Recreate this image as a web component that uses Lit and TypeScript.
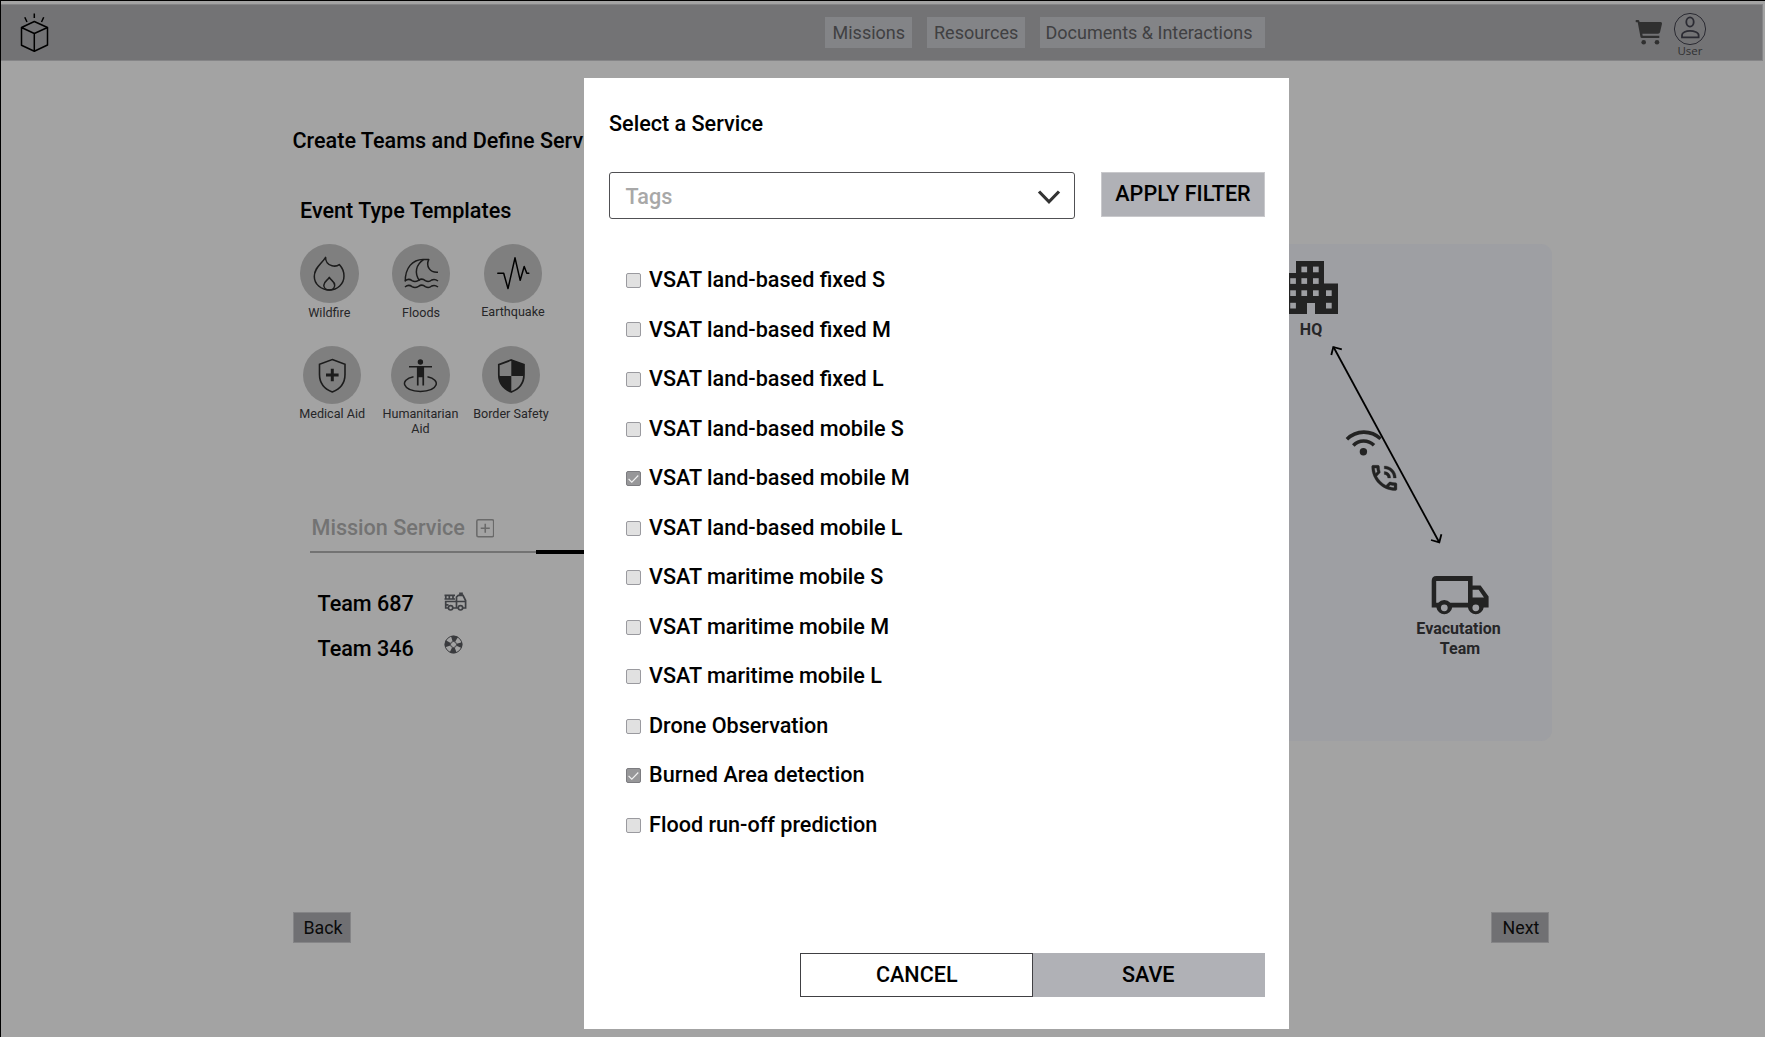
import { LitElement, html, css, svg } from "lit";
import { customElement, property, state } from "lit/decorators.js";
import { classMap } from "lit/directives/class-map.js";

const eventIcons: Record<string, unknown> = {
  wildfire: svg`<g fill="none" stroke="#1c1c1c" stroke-width="1.5" stroke-linejoin="round">
    <path d="M25.6 13.3 C25.4 17.5 28 21 32 21.8 C35 22.5 37.5 22 39.3 20.6 C42 23.5 44 27.5 44 32 C44 40 37.5 46 29.3 46 C21 46 14.3 40 14.3 32.4 C14.3 23.5 21.5 20 25.6 13.3Z"/>
    <path d="M29.3 33.4 C31 36.5 34.7 37.5 34.7 41.2 C34.7 44 32.3 46 29.3 46 C26.3 46 23.8 44 23.8 41.2 C23.8 37.5 27.6 36.5 29.3 33.4Z"/></g>`,
  floods: svg`<g fill="none" stroke="#1c1c1c" stroke-width="1.5" stroke-linejoin="round">
    <path d="M13.3 37.4 C13 24 20.5 15.4 31 15.4 L36.8 15.4 C33.5 22.5 38 28.8 46 28.2"/>
    <path d="M31.5 15.6 C24 20.5 22 29 27.5 36.8"/>
    <path d="M13 37 Q16.5 34 20 36.6 Q23 38.6 26.5 36.4 Q30 33.8 33.3 36.6 Q36.7 38.6 39.7 36 Q42.7 34.4 46 37"/>
    <path d="M13 43 Q16.5 40 20 42.6 Q23 44.6 26.5 42.4 Q30 39.8 33.3 42.6 Q36.7 44.6 39.7 42 Q42.7 40.4 46 43"/></g>`,
  earthquake: svg`<path fill="none" stroke="#000" stroke-width="1.5" stroke-linejoin="round" stroke-linecap="round" d="M13.8 29.3 H19.7 L24 44.6 L31 13.8 L36.2 36.3 L40.2 22.5 L42.8 29.3 H44.8"/>`,
  medical: svg`<g><path fill="none" stroke="#1c1c1c" stroke-width="1.6" d="M29.3 13.6 L42 18.2 V28.5 C42 37 37 43 29.3 46 C21.6 43 16.5 37 16.5 28.5 V18.2Z"/>
    <path fill="none" stroke="#1c1c1c" stroke-width="3" d="M29.3 22.7 V35.3 M23 29 H35.6"/></g>`,
  humanitarian: svg`<g fill="#1c1c1c"><circle cx="29.4" cy="16" r="2.7"/>
    <path d="M18 20 H41 V21.6 H33.1 V39.6 H31.4 V31.3 H27.6 V39.6 H25.9 V21.6 H18Z"/>
    <path fill="none" stroke="#1c1c1c" stroke-width="1.5" d="M22.5 30.7 C8 33.5 11.5 45.4 29.4 45.4 C47.5 45.4 50.5 33.5 36.5 30.7"/></g>`,
  border: svg`<g><path fill="none" stroke="#1c1c1c" stroke-width="1.7" d="M29.3 14 L42 18.6 V28.5 C42 37 37 43 29.3 46 C21.6 43 16.8 37 16.8 28.5 V18.6Z"/>
    <path fill="#1c1c1c" d="M29.3 14 L42 18.6 V30 H29.3Z M29.3 30 V46 C21.6 43 17 37 16.8 30Z"/></g>`,
};

@customElement("event-template")
class EventTemplate extends LitElement {
  @property() icon = "";
  @property() label = "";
  static styles = css`
    :host { display: flex; flex-direction: column; align-items: center; }
    .disc { display: block; width: 58.6px; height: 58.6px; border-radius: 50%; background: #7f7f7f; }
    .label { margin-top: 2px; font: 400 12.6px/15px Roboto, sans-serif; color: #262628; text-align: center; }
    .label.raised { margin-top: 1px; }
  `;
  render() {
    return html`<svg class="disc" viewBox="0 0 58.6 58.6">${eventIcons[this.icon]}</svg>
      <span class=${classMap({ label: true, raised: this.icon === "earthquake" })}>${this.label}</span>`;
  }
}

@customElement("service-option")
class ServiceOption extends LitElement {
  @property() label = "";
  @property({ type: Boolean }) checked = false;
  static styles = css`
    :host { display: flex; align-items: center; height: 49.53px; cursor: pointer; }
    .box { width: 15px; height: 15px; margin: 0.4px 8px 0 0; box-sizing: border-box; border: 1px solid #9a9a9f; border-radius: 2px; background: #e1e1e1; }
    .box.on { background: #979799; border-color: #7c7c80; }
    .tick { display: block; width: 13px; height: 13px; }
    .label { font: 500 21.6px/26px Roboto, sans-serif; color: #000; white-space: nowrap; }
  `;
  render() {
    return html`<span class=${classMap({ box: true, on: this.checked })}>
        ${this.checked
          ? html`<svg class="tick" viewBox="0 0 13 13"><path d="M1.6 7 L4.8 10.2 L11.3 3.5" fill="none" stroke="#f2f2f2" stroke-width="1.1"/></svg>`
          : null}
      </span><span class="label">${this.label}</span>`;
  }
}

@customElement("team-canvas")
class TeamCanvas extends LitElement {
  static styles = css`
    :host { display: block; position: relative; background: #9e9fa3; border-radius: 11px; }
    .art { display: block; width: 100%; height: 100%; }
    .node { position: absolute; font: 700 16px/20px Roboto, sans-serif; color: #262628; text-align: center; white-space: nowrap; }
    .hq { left: 260px; top: 76px; width: 102px; }
    .evac { left: 407px; top: 375px; width: 103px; }
    .line { display: block; }
    .second { padding-left: 3px; }
  `;
  render() {
    const windows = [
      [1301.4, 266.6], [1313, 266.6],
      [1290.2, 278.2], [1301.4, 278.2], [1313, 278.2],
      [1290.2, 290.3], [1301.4, 290.3], [1313, 290.3], [1326, 290.3],
      [1290.2, 302.8], [1326, 302.8],
    ];
    return html`<svg class="art" viewBox="1000 244 552 497">
        <path fill="#232323" d="M1283 273 H1296 V261 H1324 V283.5 H1338 V314 H1315 V303 H1307 V314 H1283Z"/>
        ${windows.map(([x, y]) => svg`<rect x=${x} y=${y} width="5.7" height="5.7" fill="#9e9fa3"/>`)}
        <g fill="none" stroke="#000" stroke-width="1.8">
          <path d="M1333.5 347 L1439.2 542.3"/>
          <path d="M1331.3 355 L1333.3 347 L1341.8 349.4 M1431 540 L1439.3 542.3 L1441.4 534.2"/>
        </g>
        <g fill="none" stroke="#232323" stroke-width="3.6">
          <path d="M1346.9 439.2 C1356.5 429.8 1371 429.8 1380.6 438.8"/>
          <path d="M1353.3 445.5 C1359 439.6 1368 439.6 1374 445.3"/>
        </g>
        <circle cx="1363.4" cy="451.8" r="3.7" fill="#232323"/>
        <g transform="translate(1367.5 461.1) scale(1.4)" fill="#232323" stroke="#232323" stroke-width="0.25">
          <path d="M20 15.5c-1.25 0-2.45-.2-3.57-.57-.1-.03-.21-.05-.31-.05-.26 0-.51.1-.71.29l-2.2 2.2c-2.83-1.44-5.15-3.75-6.59-6.58l2.2-2.21c.28-.27.36-.66.25-1.01C8.7 6.45 8.5 5.25 8.5 4c0-.55-.45-1-1-1H4c-.55 0-1 .45-1 1 0 9.39 7.61 17 17 17 .55 0 1-.45 1-1v-3.5c0-.55-.45-1-1-1zM5.03 5h1.5c.07.88.22 1.75.46 2.59L5.79 8.8c-.41-1.21-.67-2.48-.76-3.8zM19 18.97c-1.32-.09-2.6-.35-3.8-.76l1.2-1.2c.85.24 1.71.39 2.59.45v1.51zM18.5 12h2c0-4.7-3.8-8.5-8.5-8.5v2c3.6 0 6.5 2.9 6.5 6.5zM14.5 12h2c0-2.49-2.01-4.5-4.5-4.5v2c1.38 0 2.5 1.12 2.5 2.5z"/>
        </g>
        <g fill="#232323" fill-rule="evenodd">
          <path d="M1436.4 576 H1472.6 V585.6 H1480.6 L1488.6 596.5 V607.5 H1483.7 A8 8 0 0 1 1467.9 607.5 H1452.2 A8 8 0 0 1 1436.4 607.5 H1431.7 V580.7 Q1431.7 576 1436.4 576Z
            M1436.2 580.9 V602.8 H1438.2 A8 8 0 0 1 1450.3 602.8 H1468 V580.9Z
            M1472.6 589.7 V597.5 H1484 L1478.7 589.7Z
            M1440.9 607.8 A3.4 3.4 0 0 0 1447.7 607.8 A3.4 3.4 0 0 0 1440.9 607.8Z
            M1472.4 607.8 A3.4 3.4 0 0 0 1479.2 607.8 A3.4 3.4 0 0 0 1472.4 607.8Z"/>
        </g>
      </svg>
      <div class="node hq"><span class="line">HQ</span></div>
      <div class="node evac"><span class="line">Evacutation</span><span class="line second">Team</span></div>`;
  }
}

@customElement("app-root")
class AppRoot extends LitElement {
  @state() private services = [
    "VSAT land-based fixed S", "VSAT land-based fixed M", "VSAT land-based fixed L",
    "VSAT land-based mobile S", "VSAT land-based mobile M", "VSAT land-based mobile L",
    "VSAT maritime mobile S", "VSAT maritime mobile M", "VSAT maritime mobile L",
    "Drone Observation", "Burned Area detection", "Flood run-off prediction",
  ];
  @state() private selected = new Set(["VSAT land-based mobile M", "Burned Area detection"]);

  static styles = css`
    :host { display: block; position: relative; box-sizing: border-box; width: 1765px; height: 1037px; overflow: hidden;
      background: #a3a3a3; border-top: 1px solid #000; border-left: 1px solid #000; font-family: Roboto, sans-serif; color: #000; }
    * { box-sizing: border-box; }
    svg { display: block; }
    .top { display: flex; height: 57px; width: 1762px; margin-top: 3px; background: #737375; border: 1px solid #858587; border-left: none; padding-left: 16px; }
    .logo { width: 40px; height: 46px; margin-top: 4px; }
    .nav { display: flex; gap: 14.5px; margin: 12px 0 0 768px; }
    .nav-item { height: 31px; background: #838487; color: #404042; font: 400 18px/32px Roboto, sans-serif; padding-left: 7.5px; white-space: nowrap; }
    .nav-item:nth-child(1) { width: 87px; }
    .nav-item:nth-child(2) { width: 98.5px; }
    .nav-item:nth-child(3) { width: 225.5px; padding-left: 6px; }
    .account { display: flex; margin-left: auto; margin-right: 55px; gap: 10px; }
    .cart { width: 28px; height: 28px; margin-top: 13px; }
    .user { display: flex; flex-direction: column; align-items: center; width: 34px; margin-top: 6.5px; }
    .user-label { font: 400 11.5px/16px "Open Sans", sans-serif; color: #303032; margin-top: -2.5px; }
    .page { display: flex; justify-content: space-between; padding: 67px 213px 0 291.5px; }
    .left { width: 700px; }
    .heading { margin: 0; font: 500 21.6px/26px Roboto, sans-serif; white-space: nowrap; }
    .sub { margin: 44px 0 0 7.5px; }
    .row { display: flex; height: 101.5px; }
    .row.one { margin: 20px 0 0 -9.1px; }
    .row.one event-template { width: 91.8px; }
    .row.two { margin-left: -4.5px; }
    .row.two event-template { width: 88.3px; }
    .row.two event-template:last-child { width: 92.8px; }
    .tab-row { display: flex; gap: 11px; margin: 67.5px 0 0 19px; color: #737373; height: 36px; }
    .plus { width: 18.5px; height: 18.5px; margin-top: 4.5px; }
    .rule { display: flex; align-items: center; height: 4px; margin: -1px 0 0 17.5px; }
    .rule-a { width: 226px; height: 2px; background: #737373; }
    .rule-b { width: 226px; height: 4px; background: #000; }
    .teams { display: flex; flex-direction: column; gap: 19px; margin: 37px 0 0 25px; }
    .team { display: flex; align-items: flex-start; }
    .team-name { width: 126px; font: 500 21.6px/26px Roboto, sans-serif; }
    .truck { width: 24px; height: 20px; margin: 1px 0 0 0.5px; }
    .buoy { width: 19px; height: 19px; margin-top: -1px; }
    team-canvas { width: 552px; height: 497px; margin-top: 116px; margin-left: -452px; flex: none; }
    .pager { display: flex; justify-content: space-between; margin: 171px 216px 0 292px; }
    .page-btn { width: 58px; height: 30.5px; background: #707073; border: 1px solid #858587; font: 400 17.8px/29px Roboto, sans-serif; color: #0a0a0a; text-align: center; padding-left: 2px; }
    .dialog { position: absolute; left: 583px; top: 77px; width: 705px; height: 951.3px; background: #fff; padding: 33px 24px 32px 25px; display: flex; flex-direction: column; }
    .title { margin: 0; font: 500 21.6px/26px Roboto, sans-serif; }
    .filters { display: flex; justify-content: space-between; margin-top: 35px; }
    .select { display: flex; align-items: center; justify-content: space-between; width: 466px; height: 47px; border: 1px solid #505053; border-radius: 3px; padding: 2px 13px 0 15.5px; color: #a8a8a8; font: 500 21.6px/26px Roboto, sans-serif; }
    .chev { width: 24px; height: 18px; }
    .apply { width: 164px; height: 44.5px; background: #b0b1b6; border: 1px solid #c9c9cc; text-align: center; font: 500 21.6px/41px Roboto, sans-serif; }
    .list { margin: 36.5px 0 0 17px; }
    .actions { display: flex; margin: auto 0 0 auto; }
    .action { width: 232.5px; height: 44.5px; text-align: center; font: 500 21.6px/42px Roboto, sans-serif; }
    .cancel { border: 1px solid #404043; padding-left: 1px; }
    .save { background: #b0b1b6; padding-right: 1px; line-height: 44px; }
  `;

  private toggle(name: string) {
    const next = new Set(this.selected);
    next.has(name) ? next.delete(name) : next.add(name);
    this.selected = next;
  }

  render() {
    return html`
      <header class="top">
        <svg class="logo" viewBox="17 9 40 46" fill="none" stroke="#000" stroke-width="1.5" stroke-linejoin="round">
          <path d="M34.3 21.5 L47.5 27.5 V45 L34.3 51.3 L21.5 45.3 V27.5Z M21.5 27.5 L34.3 33.5 L47.5 27.5 M34.3 33.5 V51.3 M34.3 13.5 V18 M24.8 17.3 L27 22 M43.7 17.3 L41.5 22"/>
        </svg>
        <nav class="nav">
          <span class="nav-item">Missions</span><span class="nav-item">Resources</span><span class="nav-item">Documents &amp; Interactions</span>
        </nav>
        <div class="account">
          <svg class="cart" viewBox="1635 18 28 28" fill="#303030">
            <path d="M1638.5 22 H1660.5 Q1662.3 22 1662 23.7 L1660 32.3 Q1659.7 33.7 1658 33.7 H1642.3 L1642.7 35.7 H1659.3 V38 H1641.8 Q1640.7 38 1640.5 37 L1637.7 22.2 H1636 Q1635 21 1636 20 H1638.3 Q1639.3 20.2 1639.6 22Z"/>
            <circle cx="1643.7" cy="42.2" r="2.3"/><circle cx="1657" cy="42.2" r="2.3"/>
          </svg>
          <div class="user">
            <svg width="34" height="34" viewBox="0 0 34 34" fill="none" stroke="#2b2b33">
              <circle cx="17" cy="17" r="15.6" stroke-width="1"/>
              <ellipse cx="17" cy="10" rx="3.7" ry="4.6" stroke-width="1.8"/>
              <path stroke-width="1.8" d="M9 25.3 V23 C9 20.5 13 18.8 17 18.8 S25.6 20.5 25.6 23 V25.3Z"/>
            </svg>
            <span class="user-label">User</span>
          </div>
        </div>
      </header>
      <main class="page">
        <section class="left">
          <h1 class="heading">Create Teams and Define Services</h1>
          <h2 class="heading sub">Event Type Templates</h2>
          <div class="row one">
            <event-template icon="wildfire" label="Wildfire"></event-template>
            <event-template icon="floods" label="Floods"></event-template>
            <event-template icon="earthquake" label="Earthquake"></event-template>
          </div>
          <div class="row two">
            <event-template icon="medical" label="Medical Aid"></event-template>
            <event-template icon="humanitarian" label="Humanitarian Aid"></event-template>
            <event-template icon="border" label="Border Safety"></event-template>
          </div>
          <div class="tab-row">
            <span class="heading">Mission Service</span>
            <svg class="plus" viewBox="0 0 18 18" fill="none" stroke="#6a6a6a" stroke-width="1.5"><rect x="0.8" y="0.8" width="16.4" height="16.4" rx="1.5"/><path d="M9 4.6 V13.4 M4.6 9 H13.4"/></svg>
          </div>
          <div class="rule"><span class="rule-a"></span><span class="rule-b"></span></div>
          <div class="teams">
            <div class="team"><span class="team-name">Team 687</span>
              <svg class="truck" viewBox="0 0 24 20" fill="none" stroke="#3e4044" stroke-width="1.7">
                <path d="M0.5 3.3 H11 M0.5 7 H11 M1.8 3.3 V7 M5.3 3.3 V7 M9 3.3 V7 M4.5 16 H1.7 V9.5 H12.5 M14.3 16 H8.8 M12.5 16 V5 L14.3 3.3 H19 L21.6 8.5 V16 H18.8 M12.5 9.5 H21.6 M1.7 12.8 H4.5 M16 3 V1.4 H18 V3"/>
                <circle cx="6.6" cy="15.8" r="2.2"/><circle cx="16.5" cy="15.8" r="2.2"/>
              </svg>
            </div>
            <div class="team"><span class="team-name">Team 346</span>
              <svg class="buoy" viewBox="0 0 19 19" fill="none" stroke="#3a3b3e">
                <circle cx="9.5" cy="9.5" r="8.5" stroke-width="1"/>
                <circle cx="9.5" cy="9.5" r="6" stroke-width="5.6" stroke-dasharray="5 4.425" stroke-dashoffset="2.5"/>
                <circle cx="9.5" cy="9.5" r="3" stroke-width="0.9"/>
              </svg>
            </div>
          </div>
        </section>
        <team-canvas></team-canvas>
      </main>
      <div class="pager"><span class="page-btn">Back</span><span class="page-btn">Next</span></div>
      <section class="dialog" role="dialog">
        <h2 class="title">Select a Service</h2>
        <div class="filters">
          <div class="select"><span>Tags</span>
            <svg class="chev" viewBox="0 0 24 18" fill="none" stroke="#333" stroke-width="3.2"><path d="M2 3.5 L12 13.8 L22 3.5"/></svg>
          </div>
          <div class="apply">APPLY FILTER</div>
        </div>
        <div class="list">
          ${this.services.map((s) => html`<service-option label=${s} ?checked=${this.selected.has(s)} @click=${() => this.toggle(s)}></service-option>`)}
        </div>
        <div class="actions"><div class="action cancel">CANCEL</div><div class="action save">SAVE</div></div>
      </section>
    `;
  }
}
